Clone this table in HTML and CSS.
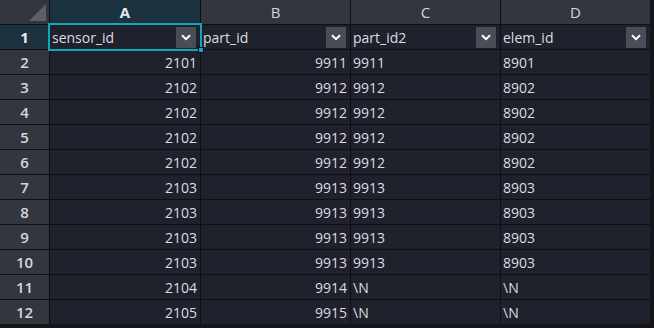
FILE: index.html
```html
<!DOCTYPE html>
<html>
<head>
<meta charset="utf-8">
<link rel="stylesheet" href="styles.css">
</head>
<body>
<div class="sheet">
  <div class="corner"><span class="tri"></span></div>
  <div class="colhead active">A</div>
  <div class="colhead">B</div>
  <div class="colhead">C</div>
  <div class="colhead">D</div>

  <div class="rowhead active">1</div>
  <div class="cell hdr sel">sensor_id<span class="dd"><svg width="10" height="7" viewBox="0 0 10 7"><path d="M1 1.2 L5 5.2 L9 1.2" fill="none" stroke="#fff" stroke-width="2"/></svg></span><span class="handle"></span></div>
  <div class="cell hdr">part_id<span class="dd"><svg width="10" height="7" viewBox="0 0 10 7"><path d="M1 1.2 L5 5.2 L9 1.2" fill="none" stroke="#fff" stroke-width="2"/></svg></span></div>
  <div class="cell hdr">part_id2<span class="dd"><svg width="10" height="7" viewBox="0 0 10 7"><path d="M1 1.2 L5 5.2 L9 1.2" fill="none" stroke="#fff" stroke-width="2"/></svg></span></div>
  <div class="cell hdr">elem_id<span class="dd"><svg width="10" height="7" viewBox="0 0 10 7"><path d="M1 1.2 L5 5.2 L9 1.2" fill="none" stroke="#fff" stroke-width="2"/></svg></span></div>

  <div class="rowhead">2</div><div class="cell num">2101</div><div class="cell num">9911</div><div class="cell">9911</div><div class="cell">8901</div>
  <div class="rowhead">3</div><div class="cell num">2102</div><div class="cell num">9912</div><div class="cell">9912</div><div class="cell">8902</div>
  <div class="rowhead">4</div><div class="cell num">2102</div><div class="cell num">9912</div><div class="cell">9912</div><div class="cell">8902</div>
  <div class="rowhead">5</div><div class="cell num">2102</div><div class="cell num">9912</div><div class="cell">9912</div><div class="cell">8902</div>
  <div class="rowhead">6</div><div class="cell num">2102</div><div class="cell num">9912</div><div class="cell">9912</div><div class="cell">8902</div>
  <div class="rowhead">7</div><div class="cell num">2103</div><div class="cell num">9913</div><div class="cell">9913</div><div class="cell">8903</div>
  <div class="rowhead">8</div><div class="cell num">2103</div><div class="cell num">9913</div><div class="cell">9913</div><div class="cell">8903</div>
  <div class="rowhead">9</div><div class="cell num">2103</div><div class="cell num">9913</div><div class="cell">9913</div><div class="cell">8903</div>
  <div class="rowhead">10</div><div class="cell num">2103</div><div class="cell num">9913</div><div class="cell">9913</div><div class="cell">8903</div>
  <div class="rowhead">11</div><div class="cell num">2104</div><div class="cell num">9914</div><div class="cell">\N</div><div class="cell">\N</div>
  <div class="rowhead">12</div><div class="cell num">2105</div><div class="cell num">9915</div><div class="cell">\N</div><div class="cell">\N</div>
</div>
</body>
</html>
```
FILE: styles.css
```css
html, body {
  margin: 0;
  padding: 0;
  background: #15161b;
  width: 654px;
  height: 328px;
  overflow: hidden;
}
.sheet {
  display: grid;
  grid-template-columns: 49px 150px 149px 149px 149px;
  grid-auto-rows: 24px;
  gap: 1px;
  background: #0e0f13;
  width: 650px;
  font-family: "Open Sans", "Noto Sans", sans-serif;
  font-size: 14px;
  color: #dcdde2;
}
.corner {
  background: #34363f;
  position: relative;
}
.tri {
  position: absolute;
  right: 3px;
  bottom: 3px;
  width: 0;
  height: 0;
  border-style: solid;
  border-width: 0 0 17px 17px;
  border-color: transparent transparent #5c5e6b transparent;
}
.colhead {
  background: #33353f;
  display: flex;
  align-items: center;
  justify-content: center;
  font-size: 15px;
  color: #d6d7dc;
}
.colhead.active {
  background: #1c323e;
  font-weight: bold;
  color: #e8e9ee;
}
.rowhead {
  background: #33353f;
  display: flex;
  align-items: center;
  justify-content: center;
  font-size: 15px;
  font-weight: 600;
  color: #d6d7dc;
}
.rowhead.active {
  background: #1c323e;
  font-weight: bold;
  color: #e8e9ee;
}
.cell {
  background: #1f212c;
  display: flex;
  align-items: center;
  padding: 0 2px;
  white-space: nowrap;
  position: relative;
}
.cell.num {
  justify-content: flex-end;
  padding-right: 3px;
}
.cell.hdr {
  justify-content: space-between;
  padding-right: 4px;
}
.dd {
  width: 20px;
  height: 21px;
  background: #4a4c58;
  display: flex;
  align-items: center;
  justify-content: center;
}
.cell.sel {
  outline: 2px solid #12a6bb;
  outline-offset: 0px;
  z-index: 2;
}
.handle {
  position: absolute;
  right: -4px;
  bottom: -4px;
  width: 6px;
  height: 6px;
  background: #12a6bb;
  border: 1px solid #0e0f13;
  box-sizing: border-box;
  z-index: 3;
}
```
